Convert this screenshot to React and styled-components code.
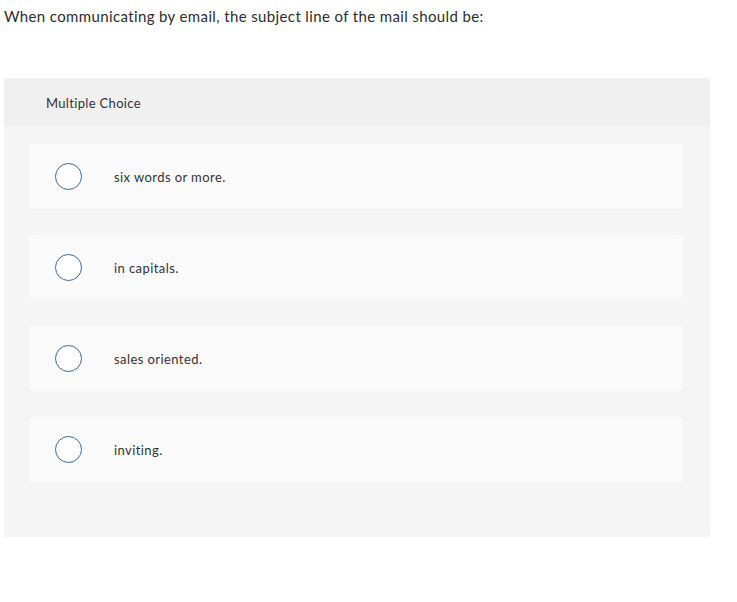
import React from "react";
import styled, { createGlobalStyle } from "styled-components";

const Global = createGlobalStyle`
  html, body { margin: 0; padding: 0; background: #fff; }
  body { font-family: Lato, "Open Sans", sans-serif; color: #333; }
`;

const Page = styled.div`
  padding: 6px 27px 0 4px;
`;

const Question = styled.p`
  margin: 0 0 52px 0;
  font-size: 15px;
  line-height: 20px;
  letter-spacing: 0.37px;
  color: #2d2d2d;
`;

const Panel = styled.section`
  background: #f5f5f5;
  border-radius: 2px;
  padding-bottom: 55px;
`;

const Header = styled.div`
  background: #f0f0f0;
  height: 49px;
  display: flex;
  align-items: center;
  padding-left: 42px;
  font-size: 13px;
  letter-spacing: 0.33px;
  color: #333;
  border-radius: 2px 2px 0 0;
`;

const Options = styled.div`
  display: flex;
  flex-direction: column;
  gap: 26px;
  padding: 17px 28px 0 26px;
`;

const Option = styled.label`
  display: flex;
  align-items: center;
  height: 65px;
  background: #fafafa;
  border-radius: 3px;
  padding-left: 25px;
  font-size: 13px;
  letter-spacing: 0.42px;
  color: #333;
  cursor: pointer;
`;

const Radio = styled.span`
  width: 27px;
  height: 27px;
  box-sizing: border-box;
  border: 1.5px solid #3a6592;
  border-radius: 50%;
  background: #fff;
  margin-right: 32px;
  flex: none;
`;

const choices = ["six words or more.", "in capitals.", "sales oriented.", "inviting."];

export default function App() {
  return (
    <Page>
      <Global />
      <Question>When communicating by email, the subject line of the mail should be:</Question>
      <Panel>
        <Header>Multiple Choice</Header>
        <Options>
          {choices.map((c) => (
            <Option key={c}>
              <Radio />
              {c}
            </Option>
          ))}
        </Options>
      </Panel>
    </Page>
  );
}
